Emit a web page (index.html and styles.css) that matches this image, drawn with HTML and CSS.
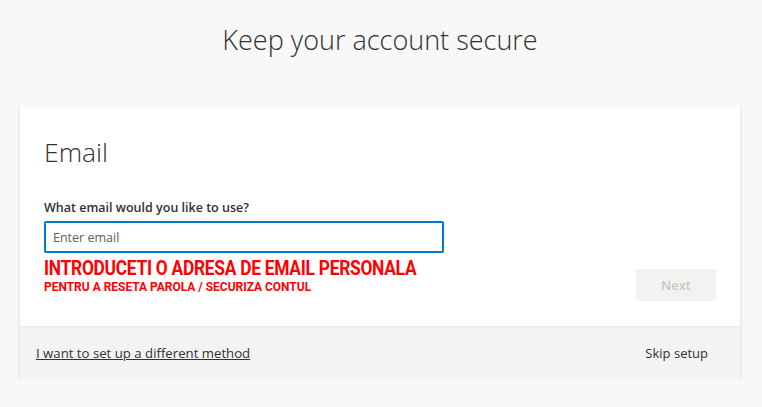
FILE: index.html
```html
<!DOCTYPE html>
<html lang="en">
<head>
<meta charset="utf-8">
<title>Keep your account secure</title>
<link rel="stylesheet" href="styles.css">
</head>
<body>
<div class="page">
  <h1 class="title">Keep your account secure</h1>
  <div class="card">
    <div class="card-body">
      <h2 class="heading">Email</h2>
      <label class="label" for="email">What email would you like to use?</label>
      <div class="row">
        <div class="left">
          <input id="email" class="input" type="text" placeholder="Enter email">
          <div class="warn1">INTRODUCETI O ADRESA DE EMAIL PERSONALA</div>
          <div class="warn2">PENTRU A RESETA PAROLA / SECURIZA CONTUL</div>
        </div>
        <button class="next" disabled>Next</button>
      </div>
    </div>
    <div class="card-footer">
      <a class="link" href="#">I want to set up a different method</a>
      <button class="skip">Skip setup</button>
    </div>
  </div>
</div>
</body>
</html>
```
FILE: styles.css
```css
html, body {
  margin: 0;
  padding: 0;
  background: #f8f8f8;
}
body {
  font-family: "Segoe UI", "Open Sans", "Noto Sans", sans-serif;
  color: #323130;
}
.page {
  padding: 22px 22px 0 20px;
}
.title {
  margin: 0;
  text-align: center;
  font-weight: 300;
  font-size: 27px;
  line-height: 36px;
  color: #323130;
}
.card {
  margin-top: 49px;
  background: #fff;
  box-shadow: 0 1.6px 3.6px rgba(0,0,0,0.13), 0 0.3px 0.9px rgba(0,0,0,0.11);
}
.card-body {
  padding: 27px 24px 25px 24px;
}
.heading {
  margin: 0;
  font-weight: 300;
  font-size: 26.5px;
  line-height: 37px;
  color: #323130;
}
.label {
  display: block;
  margin-top: 28px;
  font-size: 12.5px;
  font-weight: 600;
  line-height: 18px;
}
.row {
  display: flex;
  justify-content: space-between;
  align-items: flex-start;
  margin-top: 4px;
}
.left {
  display: flex;
  flex-direction: column;
}
.input {
  box-sizing: border-box;
  width: 400px;
  height: 32px;
  border: 2px solid #0078d4;
  border-radius: 2px;
  padding: 0 7px;
  font-family: inherit;
  font-size: 12.5px;
  color: #323130;
  outline: none;
  background: #fff;
}
.input::placeholder {
  color: #605e5c;
}
.warn1, .warn2 {
  color: #ff0000;
  font-family: "Liberation Sans Narrow", "Roboto", "Liberation Sans", sans-serif;
  font-weight: 700;
  transform-origin: left center;
  white-space: nowrap;
}
.warn1 {
  margin-top: 6px;
  font-size: 19.5px;
  line-height: 20px;
  transform: scaleX(0.89);
  letter-spacing: -0.3px;
}
.warn2 {
  margin-top: 1px;
  font-size: 13px;
  line-height: 14px;
  transform: scaleX(0.92);
  letter-spacing: 0;
}
.next {
  margin-top: 48px;
  width: 80px;
  height: 32px;
  border: none;
  border-radius: 2px;
  background: #f3f2f1;
  color: #c8c6c4;
  font-family: inherit;
  font-size: 13px;
  font-weight: 600;
}
.card-footer {
  display: flex;
  justify-content: space-between;
  align-items: center;
  height: 52px;
  padding: 0 32px 0 16px;
  background: #f3f3f3;
  border-top: 1px solid #e8e8e8;
}
.link {
  color: #323130;
  font-size: 13.2px;
  text-decoration: underline;
}
.skip {
  border: none;
  background: transparent;
  padding: 0;
  font-family: inherit;
  font-size: 13px;
  color: #323130;
}
```
